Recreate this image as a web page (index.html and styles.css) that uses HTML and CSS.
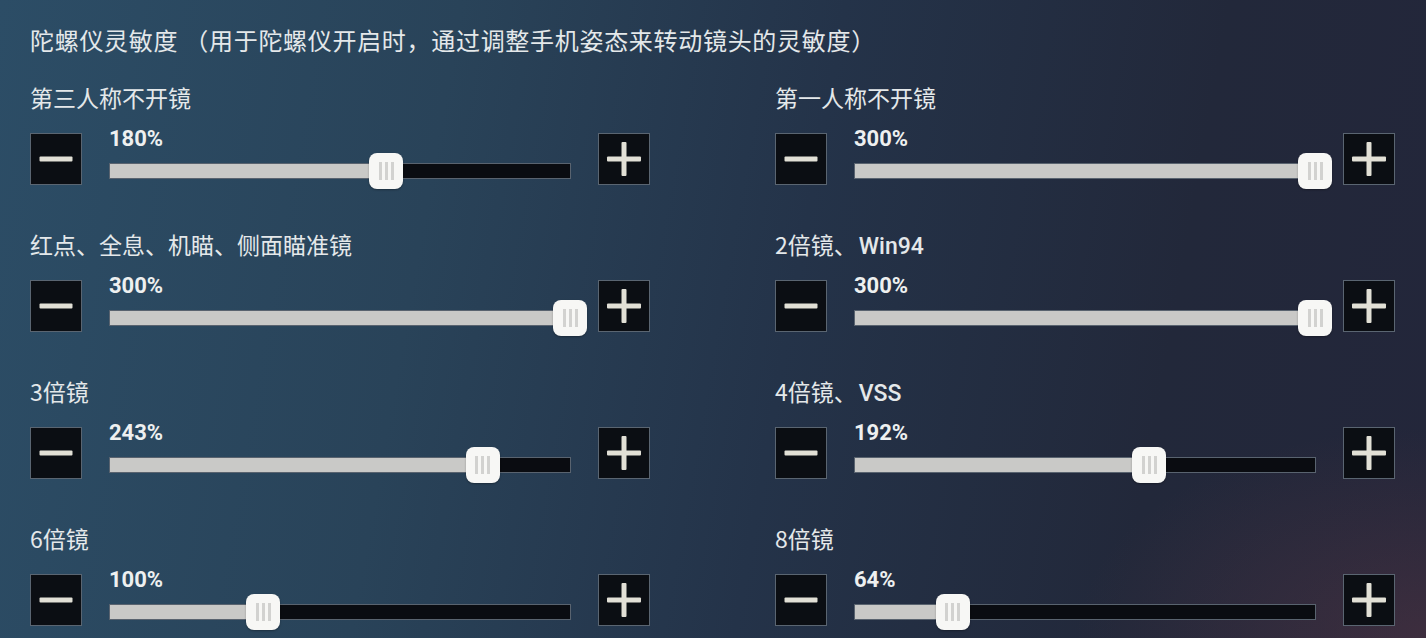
FILE: index.html
```html
<!DOCTYPE html>
<html lang="zh-CN">
<head>
  <meta charset="UTF-8" />
  <title>陀螺仪灵敏度</title>
  <link rel="stylesheet" href="styles.css">
</head>
<body>

<div class="painel">
  <h2 class="titulo">陀螺仪灵敏度 （用于陀螺仪开启时，通过调整手机姿态来转动镜头的灵敏度）</h2>

  <div class="grade">
    <div class="item">
      <div class="rotulo">第三人称不开镜</div>
      <div class="controle">
        <button class="botao menos"></button>
        <div class="slider">
          <div class="valor">180%</div>
          <div class="trilho">
            <div class="preenchido" style="width: 60%;"></div>
            <div class="pegador" style="left: 60%;"><i></i><i></i><i></i></div>
          </div>
        </div>
        <button class="botao mais"></button>
      </div>
    </div>

    <div class="item">
      <div class="rotulo">第一人称不开镜</div>
      <div class="controle">
        <button class="botao menos"></button>
        <div class="slider">
          <div class="valor">300%</div>
          <div class="trilho">
            <div class="preenchido" style="width: 100%;"></div>
            <div class="pegador" style="left: 100%;"><i></i><i></i><i></i></div>
          </div>
        </div>
        <button class="botao mais"></button>
      </div>
    </div>

    <div class="item">
      <div class="rotulo">红点、全息、机瞄、侧面瞄准镜</div>
      <div class="controle">
        <button class="botao menos"></button>
        <div class="slider">
          <div class="valor">300%</div>
          <div class="trilho">
            <div class="preenchido" style="width: 100%;"></div>
            <div class="pegador" style="left: 100%;"><i></i><i></i><i></i></div>
          </div>
        </div>
        <button class="botao mais"></button>
      </div>
    </div>

    <div class="item">
      <div class="rotulo">2倍镜、<span class="latino">Win94</span></div>
      <div class="controle">
        <button class="botao menos"></button>
        <div class="slider">
          <div class="valor">300%</div>
          <div class="trilho">
            <div class="preenchido" style="width: 100%;"></div>
            <div class="pegador" style="left: 100%;"><i></i><i></i><i></i></div>
          </div>
        </div>
        <button class="botao mais"></button>
      </div>
    </div>

    <div class="item">
      <div class="rotulo">3倍镜</div>
      <div class="controle">
        <button class="botao menos"></button>
        <div class="slider">
          <div class="valor">243%</div>
          <div class="trilho">
            <div class="preenchido" style="width: 81%;"></div>
            <div class="pegador" style="left: 81%;"><i></i><i></i><i></i></div>
          </div>
        </div>
        <button class="botao mais"></button>
      </div>
    </div>

    <div class="item">
      <div class="rotulo">4倍镜、<span class="latino">VSS</span></div>
      <div class="controle">
        <button class="botao menos"></button>
        <div class="slider">
          <div class="valor">192%</div>
          <div class="trilho">
            <div class="preenchido" style="width: 64%;"></div>
            <div class="pegador" style="left: 64%;"><i></i><i></i><i></i></div>
          </div>
        </div>
        <button class="botao mais"></button>
      </div>
    </div>

    <div class="item">
      <div class="rotulo">6倍镜</div>
      <div class="controle">
        <button class="botao menos"></button>
        <div class="slider">
          <div class="valor">100%</div>
          <div class="trilho">
            <div class="preenchido" style="width: 33.3%;"></div>
            <div class="pegador" style="left: 33.3%;"><i></i><i></i><i></i></div>
          </div>
        </div>
        <button class="botao mais"></button>
      </div>
    </div>

    <div class="item">
      <div class="rotulo">8倍镜</div>
      <div class="controle">
        <button class="botao menos"></button>
        <div class="slider">
          <div class="valor">64%</div>
          <div class="trilho">
            <div class="preenchido" style="width: 21.3%;"></div>
            <div class="pegador" style="left: 21.3%;"><i></i><i></i><i></i></div>
          </div>
        </div>
        <button class="botao mais"></button>
      </div>
    </div>
  </div>
</div>

</body>
</html>
```

FILE: styles.css
```css
* {
  box-sizing: border-box;
}

body {
  margin: 0;
  height: 638px;
  overflow: hidden;
  font-family: "Noto Sans CJK SC", "Noto Sans", sans-serif;
  color: #e4e8ea;
  background:
    radial-gradient(ellipse 500px 300px at 100% 100%, rgba(110, 60, 70, 0.35), rgba(110, 60, 70, 0) 70%),
    linear-gradient(100deg, #2c4d66 0%, #294359 30%, #243349 55%, #22283a 80%, #23263a 100%);
}

.painel {
  padding: 25px 0 0 30px;
}

.titulo {
  margin: 0 0 27px 0;
  font-size: 24px;
  font-weight: normal;
  line-height: 30px;
  letter-spacing: 0.7px;
}

.grade {
  display: grid;
  grid-template-columns: 620px 620px;
  column-gap: 125px;
  row-gap: 44px;
}

.rotulo {
  height: 30px;
  font-size: 23px;
  line-height: 30px;
  margin-bottom: 21px;
}

.latino {
  font-family: Roboto, "Noto Sans", sans-serif;
  font-weight: 500;
  line-height: 1;
  margin-left: 2px;
}

.controle {
  display: flex;
  align-items: flex-start;
  gap: 27px;
  height: 52px;
}

.botao {
  position: relative;
  width: 52px;
  height: 52px;
  flex: none;
  padding: 0;
  background-color: #0b0e13;
  border: 1px solid #5a6571;
  cursor: pointer;
}

.botao::before,
.botao::after {
  content: "";
  position: absolute;
  left: 50%;
  top: 50%;
  background-color: #e2e0d6;
  border-radius: 1px;
}

.menos::before {
  width: 33px;
  height: 5px;
  transform: translate(-50%, -50%);
}

.menos::after {
  display: none;
}

.mais::before {
  width: 34px;
  height: 5px;
  transform: translate(-50%, -50%);
}

.mais::after {
  width: 5px;
  height: 34px;
  transform: translate(-50%, -50%);
}

.slider {
  flex: 1;
}

.valor {
  font-family: Roboto, "Noto Sans", sans-serif;
  font-weight: bold;
  font-size: 22px;
  line-height: 24px;
  margin-top: -6px;
  color: #eef0f0;
}

.trilho {
  position: relative;
  margin-top: 12px;
  height: 16px;
  background-color: #0a0c11;
  border: 1px solid #59636f;
}

.preenchido {
  height: 100%;
  background-color: #c9c9c7;
}

.pegador {
  position: absolute;
  top: 50%;
  width: 34px;
  height: 36px;
  transform: translate(-50%, -50%);
  background-color: #f7f7f5;
  border-radius: 8px;
  box-shadow: 0 1px 2px rgba(0, 0, 0, 0.3);
  display: flex;
  justify-content: center;
  align-items: center;
  gap: 3px;
}

.pegador i {
  width: 3px;
  height: 18px;
  background-color: #d2d2d0;
}
```
